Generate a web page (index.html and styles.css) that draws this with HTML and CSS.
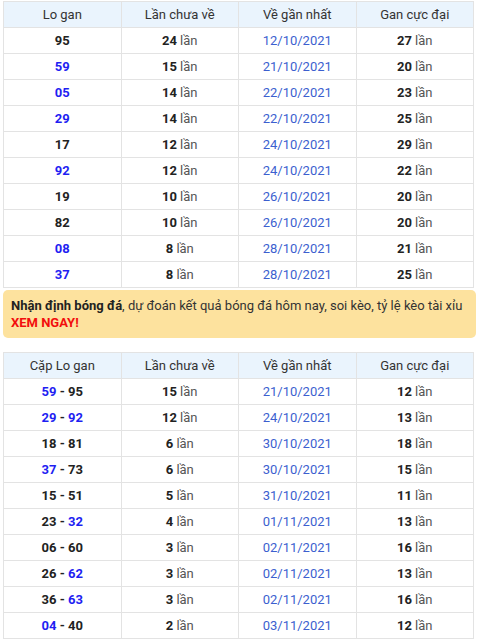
FILE: index.html
```html
<!DOCTYPE html>
<html lang="vi">
<head>
<meta charset="utf-8">
<link rel="stylesheet" href="styles.css">
</head>
<body>
<div class="wrap">
  <table class="gan">
    <thead>
      <tr><th>Lo gan</th><th>Lần chưa về</th><th>Về gần nhất</th><th>Gan cực đại</th></tr>
    </thead>
    <tbody>
      <tr><td><b>95</b></td><td><b>24</b> <span class="l">lần</span></td><td class="d">12/10/2021</td><td><b>27</b> <span class="l">lần</span></td></tr>
      <tr><td><b class="bl">59</b></td><td><b>15</b> <span class="l">lần</span></td><td class="d">21/10/2021</td><td><b>20</b> <span class="l">lần</span></td></tr>
      <tr><td><b class="bl">05</b></td><td><b>14</b> <span class="l">lần</span></td><td class="d">22/10/2021</td><td><b>23</b> <span class="l">lần</span></td></tr>
      <tr><td><b class="bl">29</b></td><td><b>14</b> <span class="l">lần</span></td><td class="d">22/10/2021</td><td><b>25</b> <span class="l">lần</span></td></tr>
      <tr><td><b>17</b></td><td><b>12</b> <span class="l">lần</span></td><td class="d">24/10/2021</td><td><b>29</b> <span class="l">lần</span></td></tr>
      <tr><td><b class="bl">92</b></td><td><b>12</b> <span class="l">lần</span></td><td class="d">24/10/2021</td><td><b>22</b> <span class="l">lần</span></td></tr>
      <tr><td><b>19</b></td><td><b>10</b> <span class="l">lần</span></td><td class="d">26/10/2021</td><td><b>20</b> <span class="l">lần</span></td></tr>
      <tr><td><b>82</b></td><td><b>10</b> <span class="l">lần</span></td><td class="d">26/10/2021</td><td><b>20</b> <span class="l">lần</span></td></tr>
      <tr><td><b class="bl">08</b></td><td><b>8</b> <span class="l">lần</span></td><td class="d">28/10/2021</td><td><b>21</b> <span class="l">lần</span></td></tr>
      <tr><td><b class="bl">37</b></td><td><b>8</b> <span class="l">lần</span></td><td class="d">28/10/2021</td><td><b>25</b> <span class="l">lần</span></td></tr>
    </tbody>
  </table>
  <div class="promo"><span class="line"><b>Nhận định bóng đá</b>, dự đoán kết quả bóng đá hôm nay, soi kèo, tỷ lệ kèo tài xỉu</span><b class="red">XEM NGAY!</b></div>
  <div class="sep"></div>
  <table class="gan">
    <thead>
      <tr><th>Cặp Lo gan</th><th>Lần chưa về</th><th>Về gần nhất</th><th>Gan cực đại</th></tr>
    </thead>
    <tbody>
      <tr><td><b class="bl">59</b> <b>-</b> <b>95</b></td><td><b>15</b> <span class="l">lần</span></td><td class="d">21/10/2021</td><td><b>12</b> <span class="l">lần</span></td></tr>
      <tr><td><b class="bl">29</b> <b>-</b> <b class="bl">92</b></td><td><b>12</b> <span class="l">lần</span></td><td class="d">24/10/2021</td><td><b>13</b> <span class="l">lần</span></td></tr>
      <tr><td><b>18</b> <b>-</b> <b>81</b></td><td><b>6</b> <span class="l">lần</span></td><td class="d">30/10/2021</td><td><b>18</b> <span class="l">lần</span></td></tr>
      <tr><td><b class="bl">37</b> <b>-</b> <b>73</b></td><td><b>6</b> <span class="l">lần</span></td><td class="d">30/10/2021</td><td><b>15</b> <span class="l">lần</span></td></tr>
      <tr><td><b>15</b> <b>-</b> <b>51</b></td><td><b>5</b> <span class="l">lần</span></td><td class="d">31/10/2021</td><td><b>11</b> <span class="l">lần</span></td></tr>
      <tr><td><b>23</b> <b>-</b> <b class="bl">32</b></td><td><b>4</b> <span class="l">lần</span></td><td class="d">01/11/2021</td><td><b>13</b> <span class="l">lần</span></td></tr>
      <tr><td><b>06</b> <b>-</b> <b>60</b></td><td><b>3</b> <span class="l">lần</span></td><td class="d">02/11/2021</td><td><b>16</b> <span class="l">lần</span></td></tr>
      <tr><td><b>26</b> <b>-</b> <b class="bl">62</b></td><td><b>3</b> <span class="l">lần</span></td><td class="d">02/11/2021</td><td><b>13</b> <span class="l">lần</span></td></tr>
      <tr><td><b>36</b> <b>-</b> <b class="bl">63</b></td><td><b>3</b> <span class="l">lần</span></td><td class="d">02/11/2021</td><td><b>16</b> <span class="l">lần</span></td></tr>
      <tr><td><b class="bl">04</b> <b>-</b> <b>40</b></td><td><b>2</b> <span class="l">lần</span></td><td class="d">03/11/2021</td><td><b>12</b> <span class="l">lần</span></td></tr>
    </tbody>
  </table>
</div>
</body>
</html>
```
FILE: styles.css
```css
html, body {
  margin: 0;
  padding: 0;
  background: #fff;
}
body {
  font-family: Roboto, "Liberation Sans", sans-serif;
  font-size: 13px;
  color: #222;
}
.wrap {
  padding: 1px 6px 0 3px;
}
.gan {
  width: 100%;
  border-collapse: collapse;
  table-layout: fixed;
  background: #fff;
}
.gan th, .gan td {
  border: 1px solid #e3e3e3;
  text-align: center;
  height: 25px;
  padding: 0;
  line-height: 16px;
}
.gan th {
  background: #eaf4fd;
  font-weight: 400;
  color: #333;
  height: 25px;
}
.gan td b {
  font-weight: 700;
  color: #222;
}
.gan td b.bl {
  color: #1f1ff2;
}
.l {
  color: #555;
}
.d {
  color: #3c5fcf;
}
.promo {
  margin-top: 2px;
  background: #fde29e;
  border-radius: 5px;
  padding: 7px 2px 7px 8px;
  line-height: 17px;
  color: #333;
  font-size: 13px;
  margin-right: -2px;
  display: flex;
  flex-direction: column;
  align-items: flex-start;
}
.promo .line {
  white-space: nowrap;
}
.promo b {
  color: #222;
}
.promo .red {
  color: #f20d0d;
}
.sep {
  height: 14px;
}
```
